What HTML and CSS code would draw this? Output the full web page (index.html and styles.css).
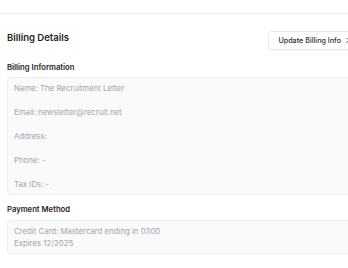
FILE: index.html
```html
<!DOCTYPE html>
<html lang="en">
<head>
  <meta charset="UTF-8" />
  <meta name="viewport" content="width=device-width, initial-scale=1.0"/>
  <title>Billing Details</title>
  <link rel="stylesheet" href="styles.css">
</head>
<body>

  <div class="topbar"></div>

  <div class="page">
    <div class="header">
      <h2>Billing Details</h2>
      <button class="update-btn">
        Update Billing Info
        <svg width="9" height="9" viewBox="0 0 24 24" fill="none" stroke="#374151" stroke-width="2" stroke-linecap="round" stroke-linejoin="round"><path d="M7 17L17 7"/><path d="M8 7h9v9"/></svg>
      </button>
    </div>

    <!-- billing info -->
    <div class="section">
      <h3>Billing Information</h3>
      <div class="box rows">
        <div>Name: The Recruitment Letter</div>
        <div>Email: newsletter@recruit.net</div>
        <div>Address:</div>
        <div>Phone: -</div>
        <div>Tax IDs: -</div>
      </div>
    </div>

    <!-- payment -->
    <div class="section payment">
      <h3>Payment Method</h3>
      <div class="box">
        <div>Credit Card: Mastercard ending in 0300</div>
        <div>Expires 12/2025</div>
      </div>
    </div>
  </div>

</body>
</html>
```

FILE: styles.css
```css
body {
  font-family: Inter, "Noto Sans", sans-serif;
  margin: 0;
  background: #fff;
  overflow: hidden;
  color: #111827;
}

.topbar {
  height: 13px;
  border-bottom: 1px solid #eeeff1;
}

.page {
  width: 356px;
  padding: 17px 7px 0 7px;
}

.header {
  display: flex;
  justify-content: space-between;
  align-items: flex-start;
}

h2 {
  font-size: 9.5px;
  line-height: 14px;
  font-weight: 600;
  margin: 0;
  color: #1f2329;
}

.update-btn {
  display: flex;
  align-items: center;
  gap: 3px;
  height: 19px;
  padding: 0 9px;
  background: #fff;
  border: 1px solid #e6e8eb;
  border-radius: 4px;
  font-family: inherit;
  font-size: 7.2px;
  font-weight: 500;
  color: #2b2f36;
  box-shadow: 0 1px 2px rgba(0,0,0,0.03);
}

.section {
  margin-top: 12px;
}

.section.payment {
  margin-top: 9px;
}

h3 {
  font-size: 7.7px;
  line-height: 11px;
  font-weight: 600;
  margin: 0 0 4px 0;
  color: #1f2329;
}

.payment h3 {
  margin-bottom: 5px;
}

.box {
  background: #f9fafb;
  border: 1px solid #eceef1;
  border-radius: 3px;
  padding: 4px 6px;
  font-size: 7.8px;
  line-height: 12px;
  color: #a1a5ad;
}

.rows {
  display: flex;
  flex-direction: column;
  gap: 12px;
}
```
